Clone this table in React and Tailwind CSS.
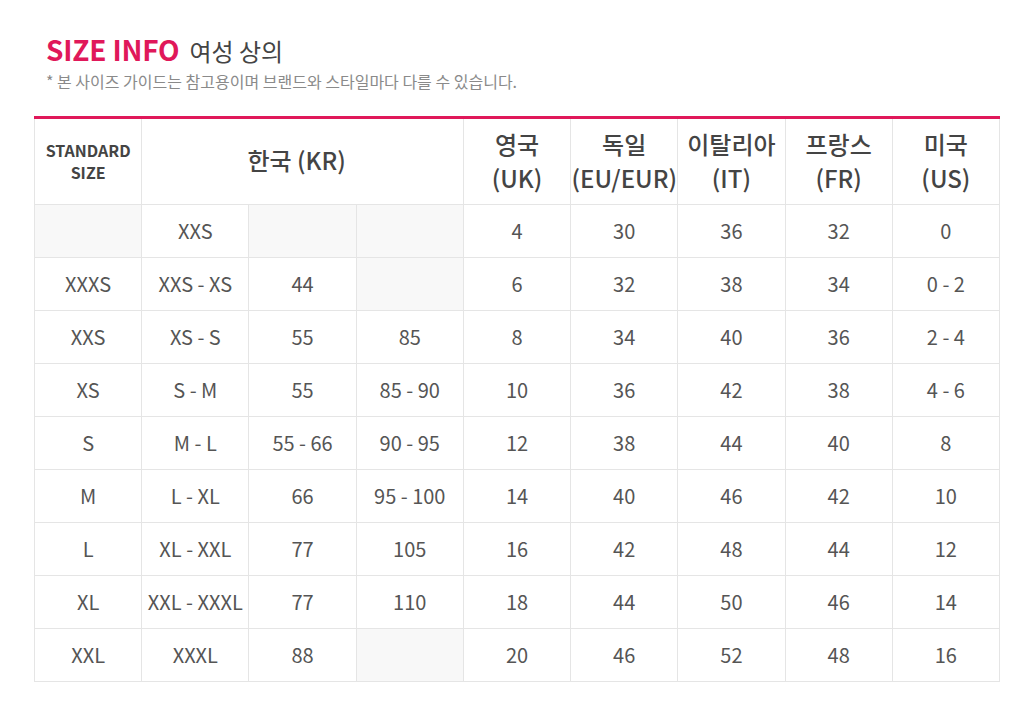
import React from 'react';

const rows = [
  ['', 'XXS', '', '', '4', '30', '36', '32', '0'],
  ['XXXS', 'XXS - XS', '44', '', '6', '32', '38', '34', '0 - 2'],
  ['XXS', 'XS - S', '55', '85', '8', '34', '40', '36', '2 - 4'],
  ['XS', 'S - M', '55', '85 - 90', '10', '36', '42', '38', '4 - 6'],
  ['S', 'M - L', '55 - 66', '90 - 95', '12', '38', '44', '40', '8'],
  ['M', 'L - XL', '66', '95 - 100', '14', '40', '46', '42', '10'],
  ['L', 'XL - XXL', '77', '105', '16', '42', '48', '44', '12'],
  ['XL', 'XXL - XXXL', '77', '110', '18', '44', '50', '46', '14'],
  ['XXL', 'XXXL', '88', '', '20', '46', '52', '48', '16'],
];

const countries = [
  ['영국', '(UK)'],
  ['독일', '(EU/EUR)'],
  ['이탈리아', '(IT)'],
  ['프랑스', '(FR)'],
  ['미국', '(US)'],
];

export default function App() {
  return (
    <div
      className="bg-white min-h-screen pt-[30px] pl-[34px]"
      style={{ fontFamily: '"Noto Sans CJK KR", "Noto Sans", sans-serif' }}
    >
      {/* Title */}
      <div className="pl-[12px]">
        <h1 className="flex items-baseline gap-[10px] leading-[38px]">
          <span className="text-[28px] font-bold text-[#e0185a] tracking-[-0.2px]">SIZE INFO</span>
          <span className="text-[24px] text-[#444]">여성 상의</span>
        </h1>
        <p className="text-[16px] text-[#8a8a8a] leading-[22px]">
          * 본 사이즈 가이드는 참고용이며 브랜드와 스타일마다 다를 수 있습니다.
        </p>
      </div>

      {/* Table */}
      <div className="mt-[24px] w-[966px]">
        <div className="h-[3px] bg-[#e0185a]" />
        <table className="w-[966px] table-fixed border-collapse text-center">
          <colgroup>
            {Array.from({ length: 9 }).map((_, i) => (
              <col key={i} className="w-[107px]" />
            ))}
          </colgroup>
          <thead>
            <tr className="h-[85px]">
              <th className="border border-t-0 border-[#e5e5e5] text-[16px] font-bold text-[#444] leading-[22px] align-middle">
                STANDARD
                <br />
                SIZE
              </th>
              <th colSpan={3} className="border border-t-0 border-[#e5e5e5] text-[24px] font-medium text-[#444] align-middle pb-[2px] pr-[12px]">
                한국 (KR)
              </th>
              {countries.map(([ko, en]) => (
                <th
                  key={en}
                  className="border border-t-0 border-[#e5e5e5] text-[24px] font-medium text-[#444] leading-[34px] align-middle px-0 whitespace-nowrap"
                >
                  {ko}
                  <br />
                  {en}
                </th>
              ))}
            </tr>
          </thead>
          <tbody>
            {rows.map((row, r) => (
              <tr key={r} className="h-[53px]">
                {row.map((cell, c) => {
                  const empty = cell === '' && c < 4;
                  return (
                    <td
                      key={c}
                      className={`border border-[#e5e5e5] text-[20px] text-[#555] align-middle whitespace-nowrap px-0 ${
                        empty ? 'bg-[#f8f8f8]' : 'bg-white'
                      }`}
                    >
                      {cell}
                    </td>
                  );
                })}
              </tr>
            ))}
          </tbody>
        </table>
      </div>
    </div>
  );
}
